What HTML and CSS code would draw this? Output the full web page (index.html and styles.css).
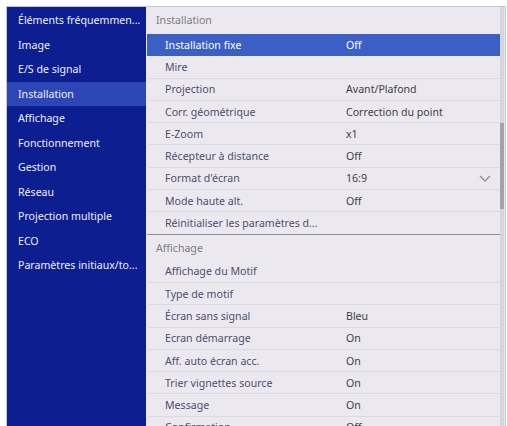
FILE: index.html
```html
<!DOCTYPE html>
<html lang="fr">
<head>
    <meta charset="UTF-8">
    <title>Menu - Installation</title>
    <link rel="stylesheet" href="styles.css">
</head>
<body>
    <div class="menu">
        <!-- Top level categories -->
        <ul class="side">
            <li>Éléments fréquemmen...</li>
            <li>Image</li>
            <li>E/S de signal</li>
            <li class="active">Installation</li>
            <li>Affichage</li>
            <li>Fonctionnement</li>
            <li>Gestion</li>
            <li>Réseau</li>
            <li>Projection multiple</li>
            <li>ECO</li>
            <li>Paramètres initiaux/to...</li>
        </ul>

        <!-- Settings of the selected category -->
        <div class="panel">
            <div class="group">Installation</div>
            <div class="row selected"><span class="label">Installation fixe</span><span class="value">Off</span></div>
            <div class="row"><span class="label">Mire</span><span class="value"></span></div>
            <div class="row"><span class="label">Projection</span><span class="value">Avant/Plafond</span></div>
            <div class="row"><span class="label">Corr. géométrique</span><span class="value">Correction du point</span></div>
            <div class="row"><span class="label">E-Zoom</span><span class="value">x1</span></div>
            <div class="row"><span class="label">Récepteur à distance</span><span class="value">Off</span></div>
            <div class="row">
                <span class="label">Format d'écran</span><span class="value">16:9</span>
                <svg class="chevron" width="12" height="7" viewBox="0 0 12 7"><path d="M1 1 L6 6 L11 1" fill="none" stroke="#8d8ca3" stroke-width="1.3"/></svg>
            </div>
            <div class="row"><span class="label">Mode haute alt.</span><span class="value">Off</span></div>
            <div class="row last"><span class="label">Réinitialiser les paramètres d...</span><span class="value"></span></div>

            <div class="group">Affichage</div>
            <div class="row"><span class="label">Affichage du Motif</span><span class="value"></span></div>
            <div class="row"><span class="label">Type de motif</span><span class="value"></span></div>
            <div class="row"><span class="label">Écran sans signal</span><span class="value">Bleu</span></div>
            <div class="row"><span class="label">Ecran démarrage</span><span class="value">On</span></div>
            <div class="row"><span class="label">Aff. auto écran acc.</span><span class="value">On</span></div>
            <div class="row"><span class="label">Trier vignettes source</span><span class="value">On</span></div>
            <div class="row"><span class="label">Message</span><span class="value">On</span></div>
            <div class="row"><span class="label">Confirmation</span><span class="value">Off</span></div>
        </div>

        <div class="scrollbar"><div class="thumb"></div></div>
    </div>
</body>
</html>
```

FILE: styles.css
```css
body {
    margin: 0;
    background: #ffffff;
    font-family: "Noto Sans", "Open Sans", sans-serif;
    font-size: 10.6px;
}

.menu {
    display: flex;
    margin: 6px 0 0 6px;
    width: 500px;
    height: 420px;
    overflow: hidden;
    border: 1px solid #c9c8d0;
    border-bottom: none;
    box-sizing: border-box;
    background: #ebe9ef;
}

/* left column */
.side {
    list-style: none;
    margin: 0;
    padding: 1px 0 0;
    width: 139px;
    flex-shrink: 0;
    background: #0d1e91;
    color: #eef0ff;
}

.side li {
    height: 24.5px;
    line-height: 24.5px;
    padding-left: 11px;
    white-space: nowrap;
}

.side li.active {
    background: #2d46b6;
}

/* right column */
.panel {
    flex: 1;
    margin-left: 1px;
    background: #ebe9ef;
}

.group {
    height: 26px;
    line-height: 26px;
    padding-left: 9px;
    color: #7d7c88;
}

.group:first-child {
    height: 27px;
    line-height: 27px;
}

.row {
    display: flex;
    align-items: center;
    height: 22.3px;
    padding-left: 18px;
    border-bottom: 1px solid #dcdae1;
    box-sizing: border-box;
    color: #4d4e70;
    white-space: nowrap;
}

.row.last {
    border-bottom: 1px solid #8d8c94;
}

.row .label {
    width: 181px;
}

.row .value {
    color: #404046;
}

.row.selected {
    background: #3c5fc6;
    border-bottom-color: #3c5fc6;
}

.row.selected .label,
.row.selected .value {
    color: #ffffff;
}

.chevron {
    margin-left: auto;
    margin-right: 9px;
}

.scrollbar {
    width: 4px;
    flex-shrink: 0;
    background: #d6d5db;
    margin-right: 1px;
}

.thumb {
    margin-top: 116px;
    height: 86px;
    background: #a3a2aa;
}
```
